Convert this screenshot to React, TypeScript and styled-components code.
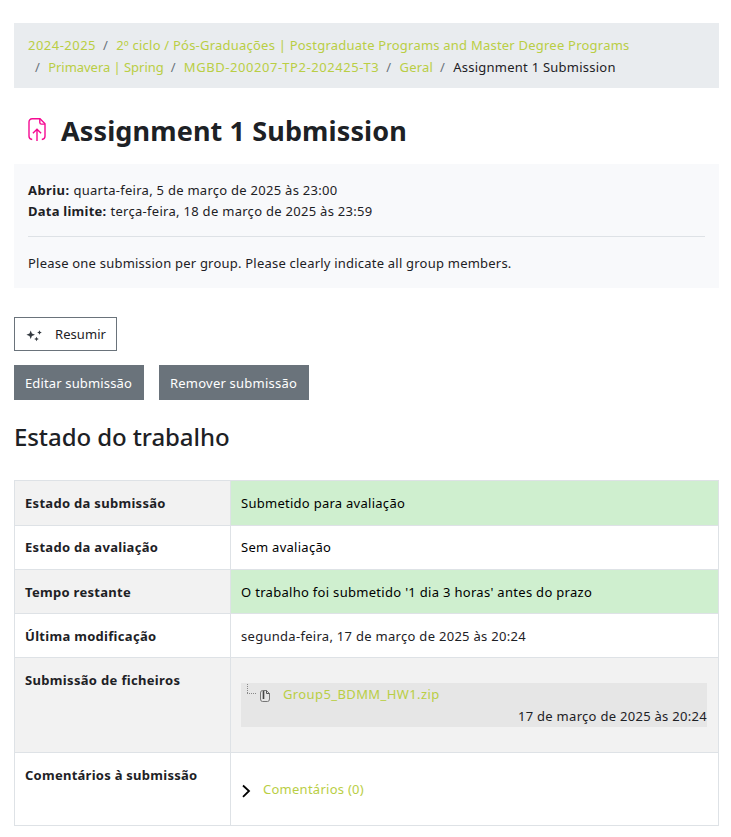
import React from "react";
import styled, { createGlobalStyle, css } from "styled-components";

const GlobalStyle = createGlobalStyle`
  *, *::before, *::after { box-sizing: border-box; }
  body {
    margin: 0;
    background: #fff;
    color: #1d2125;
    font-family: "Noto Sans", "Open Sans", sans-serif;
    font-size: 13px;
    line-height: 21px;
  }
`;

const Page = styled.main`
  width: 731px;
  height: 837px;
  padding: 23px 12px 0 14px;
  overflow: hidden;
`;

const Tracked = styled.span<{ $track?: number }>`
  letter-spacing: ${(p) => p.$track ?? 0}px;
  white-space: pre;
`;

const Breadcrumb = styled.ol`
  display: flex;
  flex-wrap: wrap;
  height: 65px;
  margin: 0;
  padding: 11px 14px;
  list-style: none;
  background: #e9ecef;
  line-height: 22px;
`;

const Crumb = styled.li`
  display: flex;

  & + &::before {
    content: "/";
    width: 20.2px;
    padding-left: 7px;
    color: #6a737b;
  }
`;

const Link = styled.a<{ $track?: number }>`
  color: #b9ce44;
  text-decoration: none;
  letter-spacing: ${(p) => p.$track ?? 0}px;
  white-space: pre;
`;

const TitleBar = styled.header`
  display: flex;
  align-items: center;
  height: 76px;
  padding: 9px 0 0 14px;
`;

const TitleIcon = styled.svg`
  width: 20px;
  height: 26px;
  margin: -1px 13px 0 0;
  flex: none;
`;

const Title = styled.h1`
  margin: 0;
  font-size: 27px;
  font-weight: 700;
  line-height: 36px;
  letter-spacing: 0.12px;
  white-space: nowrap;
`;

const Info = styled.section`
  height: 124px;
  padding: 16px 14px;
  background: #f8f9fb;
`;

const DateLine = styled.div`
  display: flex;
  gap: 4px;
  height: 21px;
`;

const Label = styled.strong<{ $track?: number }>`
  font-weight: 700;
  letter-spacing: ${(p) => p.$track ?? 0.3}px;
`;

const Description = styled.div`
  margin-top: 14px;
  padding-top: 16px;
  border-top: 1px solid #dee2e6;
`;

const Actions = styled.div`
  display: flex;
  gap: 15px;
  margin-top: 14px;
`;

const Button = styled.button<{ $width: number; $outline?: boolean }>`
  display: flex;
  align-items: center;
  width: ${(p) => p.$width}px;
  height: 35px;
  padding: 1px 0 0 10px;
  border: 1px solid #6a737b;
  background: #6a737b;
  color: #fff;
  font: inherit;

  ${(p) =>
    p.$outline &&
    css`
      height: 34px;
      margin-top: 29px;
      padding-top: 0;
      background: #fff;
      color: #1d2125;
    `}
`;

const Sparkle = styled.svg`
  width: 18px;
  height: 16px;
  margin: 2px 12px 0 0;
`;

const SectionTitle = styled.h3`
  margin: 20px 0 27px;
  font-size: 24px;
  font-weight: 500;
  line-height: 33px;
  letter-spacing: -0.08px;
`;

const Table = styled.div`
  border: solid #dee2e6;
  border-width: 1px 0 0 1px;
`;

const Row = styled.div<{ $height: number; $striped?: boolean }>`
  display: grid;
  grid-template-columns: 216px 488px;
  height: ${(p) => p.$height}px;
  background: ${(p) => (p.$striped ? "#f2f2f2" : "#fff")};
`;

const Cell = styled.div<{ $success?: boolean; $dark?: boolean; $top?: number }>`
  padding: ${(p) => p.$top ?? 12}px 11px 0 10px;
  border: solid #dee2e6;
  border-width: 0 1px 1px 0;
  background: ${(p) => (p.$success ? "#cfefcf" : "transparent")};
  color: ${(p) => (p.$success || p.$dark ? "#000" : "inherit")};
`;

const FileBox = styled.div`
  height: 44px;
  background: #e6e6e6;
  line-height: 22px;
`;

const FileName = styled.div`
  display: flex;
`;

const FileIcon = styled.svg`
  width: 30px;
  height: 22px;
  margin-right: 12px;
`;

const FileDate = styled.div`
  text-align: right;
`;

const Comments = styled.div`
  display: flex;
  align-items: center;
  height: 22px;
  line-height: 22px;
`;

const Chevron = styled.svg`
  width: 10px;
  height: 14px;
  margin: 3px 12px 0 0;
`;

const crumbs = [
  { text: "2024-2025", track: 0.48 },
  { text: "2º ciclo / Pós-Graduações | Postgraduate Programs and Master Degree Programs", track: 0.222 },
  { text: "Primavera | Spring", track: -0.04 },
  { text: "MGBD-200207-TP2-202425-T3", track: 0.567 },
  { text: "Geral", track: 0.2 },
];

const dates = [
  { label: "Abriu:", labelTrack: 0.41, value: "quarta-feira, 5 de março de 2025 às 23:00", track: 0.27 },
  { label: "Data limite:", labelTrack: 0.25, value: "terça-feira, 18 de março de 2025 às 23:59", track: 0.287 },
];

const statuses = [
  { label: "Estado da submissão", value: "Submetido para avaliação", track: 0.27, height: 45, success: true },
  { label: "Estado da avaliação", value: "Sem avaliação", track: 0.27, height: 44, top: 11, dark: true },
  { label: "Tempo restante", value: "O trabalho foi submetido '1 dia 3 horas' antes do prazo", track: 0.3, height: 44, success: true },
  { label: "Última modificação", value: "segunda-feira, 17 de março de 2025 às 20:24", track: 0.29, height: 44 },
];

export default function App() {
  return (
    <>
      <GlobalStyle />
      <Page>
        <nav>
          <Breadcrumb>
            {crumbs.map((c) => (
              <Crumb key={c.text}>
                <Link $track={c.track}>{c.text}</Link>
              </Crumb>
            ))}
            <Crumb>
              <Tracked $track={0.24}>Assignment 1 Submission</Tracked>
            </Crumb>
          </Breadcrumb>
        </nav>

        <TitleBar>
          <TitleIcon viewBox="0 0 20 26" fill="none" stroke="#f50a92" strokeWidth="1.4">
            <path d="M4.2 22.5C2 22.3 1 21.2 1 19.3V5C1 3 2.2 1.8 4.2 1.8H12L17 6.8V19.3C17 21.2 16 22.3 13.8 22.5" />
            <path d="M11.8 2V5.4C11.8 6.6 12.4 7.1 13.5 7.1H17" />
            <path d="M9 24V12.6M4.9 16.2L9 12.2L13.1 16.2" />
          </TitleIcon>
          <Title>Assignment 1 Submission</Title>
        </TitleBar>

        <Info>
          {dates.map((d) => (
            <DateLine key={d.label}>
              <Label $track={d.labelTrack}>{d.label}</Label>
              <Tracked $track={d.track}>{d.value}</Tracked>
            </DateLine>
          ))}
          <Description>
            <Tracked $track={0.215}>
              Please one submission per group. Please clearly indicate all group members.
            </Tracked>
          </Description>
        </Info>

        <Button $width={103} $outline>
          <Sparkle viewBox="0 0 18 16" fill="#343a40">
            <path d="M5.7 3.5L6.9 6.5L10 7.7L6.9 8.9L5.7 12L4.5 8.9L1.4 7.7L4.5 6.5Z" />
            <path d="M14.5 3.2L15.2 4.8L16.8 5.5L15.2 6.2L14.5 7.8L13.8 6.2L12.2 5.5L13.8 4.8Z" />
            <path d="M11.5 9.7L12.2 11.3L13.8 12L12.2 12.7L11.5 14.3L10.8 12.7L9.2 12L10.8 11.3Z" />
          </Sparkle>
          <Tracked $track={0.06}>Resumir</Tracked>
        </Button>
        <Actions>
          <Button $width={130}>
            <Tracked $track={0.144}>Editar submissão</Tracked>
          </Button>
          <Button $width={150}>
            <Tracked $track={0.22}>Remover submissão</Tracked>
          </Button>
        </Actions>

        <SectionTitle>Estado do trabalho</SectionTitle>

        <Table>
          {statuses.map((s, i) => (
            <Row key={s.label} $height={s.height} $striped={i % 2 === 0}>
              <Cell $top={s.top}>
                <Label>{s.label}</Label>
              </Cell>
              <Cell $top={s.top} $success={s.success} $dark={s.dark}>
                <Tracked $track={s.track}>{s.value}</Tracked>
              </Cell>
            </Row>
          ))}
          <Row $height={95} $striped>
            <Cell>
              <Label $track={0.33}>Submissão de ficheiros</Label>
            </Cell>
            <Cell $top={25}>
              <FileBox>
                <FileName>
                  <FileIcon viewBox="0 0 30 22" fill="none">
                    <path d="M6.5 1V11" stroke="#888" strokeDasharray="1 1" />
                    <path d="M6 10.5H16" stroke="#888" strokeDasharray="1 1" />
                    <path d="M21.5 7.5H25.5L28.5 10.5V16Q28.5 18.5 26.5 18.5H21.5Q19.5 18.5 19.5 16V10Q19.5 7.5 21.5 7.5Z" stroke="#777" />
                    <path d="M25.5 7.5V10.5H28.5" stroke="#555" />
                    <path d="M22.5 8V16" stroke="#444" strokeWidth="1.6" />
                  </FileIcon>
                  <Link $track={0.395}>Group5_BDMM_HW1.zip</Link>
                </FileName>
                <FileDate>
                  <Tracked $track={0.29}>17 de março de 2025 às 20:24</Tracked>
                </FileDate>
              </FileBox>
            </Cell>
          </Row>
          <Row $height={73}>
            <Cell>
              <Label $track={0.26}>Comentários à submissão</Label>
            </Cell>
            <Cell $top={25}>
              <Comments>
                <Chevron viewBox="0 0 10 14" fill="none" stroke="#000" strokeWidth="1.8">
                  <path d="M2 1.5L8 7L2 12.8" />
                </Chevron>
                <Link $track={0.26}>Comentários (0)</Link>
              </Comments>
            </Cell>
          </Row>
        </Table>
      </Page>
    </>
  );
}
